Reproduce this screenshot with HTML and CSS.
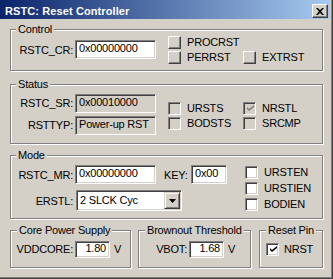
FILE: index.html
```html
<!DOCTYPE html>
<html lang="en">
<head>
    <meta charset="UTF-8">
    <title>RSTC: Reset Controller</title>
    <link rel="stylesheet" href="styles.css">
</head>
<body>
    <div class="window">
        <div class="titlebar">
            <span class="title">RSTC: Reset Controller</span>
            <span class="close">
                <svg width="8" height="7" viewBox="0 0 8 7"><path d="M0 0h2l2 2.2L6 0h2L5 3.5 8 7H6L4 4.8 2 7H0l3-3.5z" fill="#000"/></svg>
            </span>
        </div>
        <div class="client">
            <!-- control -->
            <div class="group control">
                <span class="legend">Control</span>
                <div class="fields">
                    <div class="row"><span class="lbl">RSTC_CR:</span><span class="edit w81">0x00000000</span></div>
                </div>
                <div class="checks two">
                    <div class="check"><span class="btn"></span>PROCRST</div>
                    <div></div>
                    <div class="check"><span class="btn"></span>PERRST</div>
                    <div class="check"><span class="btn"></span>EXTRST</div>
                </div>
            </div>

            <!-- status -->
            <div class="group status">
                <span class="legend">Status</span>
                <div class="fields">
                    <div class="row"><span class="lbl">RSTC_SR:</span><span class="edit w81 ro">0x00010000</span></div>
                    <div class="row"><span class="lbl">RSTTYP:</span><span class="edit w81 ro">Power-up RST</span></div>
                </div>
                <div class="checks two">
                    <div class="check"><span class="box off"></span>URSTS</div>
                    <div class="check"><span class="box off"><svg class="tick" width="7" height="7" viewBox="0 0 7 7"><path d="M0 2l2 2 5-4v2L2 6 0 4z" fill="#808080"/></svg></span>NRSTL</div>
                    <div class="check"><span class="box off"></span>BODSTS</div>
                    <div class="check"><span class="box off"></span>SRCMP</div>
                </div>
            </div>

            <!-- mode -->
            <div class="group mode">
                <span class="legend">Mode</span>
                <div class="fields">
                    <div class="row">
                        <span class="lbl">RSTC_MR:</span><span class="edit w81">0x00000000</span>
                        <span class="key">KEY:</span><span class="edit w36">0x00</span>
                    </div>
                    <div class="row">
                        <span class="lbl">ERSTL:</span>
                        <span class="select">
                            <span class="value">2 SLCK Cyc</span>
                            <span class="drop"><svg width="7" height="4" viewBox="0 0 7 4"><path d="M0 0h7L3.5 4z" fill="#000"/></svg></span>
                        </span>
                    </div>
                </div>
                <div class="checks one">
                    <div class="check"><span class="box"></span>URSTEN</div>
                    <div class="check"><span class="box"></span>URSTIEN</div>
                    <div class="check"><span class="box"></span>BODIEN</div>
                </div>
            </div>

            <!-- bottom -->
            <div class="bottom">
                <div class="group core">
                    <span class="legend">Core Power Supply</span>
                    <span class="lbl w58">VDDCORE:</span><span class="edit num">1.80</span><span class="unit">V</span>
                </div>
                <div class="group brown">
                    <span class="legend">Brownout Threshold</span>
                    <span class="lbl w41">VBOT:</span><span class="edit num">1.68</span><span class="unit">V</span>
                </div>
                <div class="group reset">
                    <span class="legend">Reset Pin</span>
                    <div class="check"><span class="box"><svg class="tick" width="7" height="7" viewBox="0 0 7 7"><path d="M0 2l2 2 5-4v2L2 6 0 4z" fill="#000"/></svg></span>NRST</div>
                </div>
            </div>
        </div>
    </div>
</body>
</html>
```

FILE: styles.css
```css
/* base */
body {
    margin: 0;
    font-family: "Liberation Sans", Arial, sans-serif;
    font-size: 11px;
    letter-spacing: -0.2px;
    color: #000;
}
/* window frame */
.window {
    box-sizing: border-box;
    width: 333px;
    height: 279px;
    padding: 0 2px 2px 0;
    border-right: 1px solid #404040;
    border-bottom: 1px solid #404040;
    background: #d4d0c8;
    box-shadow: inset -1px -1px 0 #808080;
}
.titlebar {
    display: flex;
    justify-content: space-between;
    height: 19px;
    background: linear-gradient(to right, #0a246a, #a6caf0);
}
.title {
    padding: 4px 0 0 5px;
    line-height: 15px;
    font-size: 11px;
    font-weight: bold;
    letter-spacing: 0.1px;
    color: #fff;
}
.close {
    display: flex;
    align-items: center;
    justify-content: center;
    box-sizing: border-box;
    margin: 4px 2px 0 0;
    width: 16px;
    height: 14px;
    border: 1px solid;
    border-color: #fff #404040 #404040 #fff;
    background: #d4d0c8;
    box-shadow: inset -1px -1px 0 #808080;
}
.client {
    padding: 10px 0 0 10px;
}
/* group boxes */
.group {
    position: relative;
    display: flex;
    align-items: center;
    box-sizing: border-box;
    width: 313px;
    border: 1px solid #808080;
    box-shadow: inset 1px 1px 0 #fff, 1px 1px 0 #fff;
}
.legend {
    position: absolute;
    top: -7px;
    left: 5px;
    padding: 0 2px;
    line-height: 13px;
    background: #d4d0c8;
}
.control {
    height: 42px;
    padding: 0 0 1px 6px;
}
.status {
    margin-top: 13px;
    height: 60px;
    padding-left: 6px;
}
.mode {
    margin-top: 11px;
    height: 64px;
    padding: 2px 0 0 6px;
}
.fields {
    display: flex;
    flex-direction: column;
}
.status .fields {
    gap: 3px;
}
.mode .fields {
    gap: 6px;
}
.row {
    display: flex;
    align-items: center;
    gap: 2px;
}
.lbl {
    width: 56px;
    text-align: right;
}
.key {
    margin-left: 6px;
    width: 25px;
}
/* edit fields */
.edit {
    box-sizing: border-box;
    height: 19px;
    padding: 0 3px;
    line-height: 15px;
    border: 1px solid;
    border-color: #808080 #fff #fff #808080;
    background: #fff;
    box-shadow: inset 1px 1px 0 #404040, inset -1px -1px 0 #d4d0c8;
    white-space: nowrap;
}
.edit.ro {
    background: #d4d0c8;
}
.w81 {
    width: 81px;
}
.w36 {
    width: 36px;
}
.select {
    display: flex;
    box-sizing: border-box;
    margin-left: 1px;
    width: 106px;
    height: 21px;
    padding: 1px;
    border: 1px solid;
    border-color: #808080 #fff #fff #808080;
    background: #fff;
    box-shadow: inset 1px 1px 0 #404040, inset -1px -1px 0 #d4d0c8;
}
.select .value {
    flex: 1;
    padding-left: 2px;
    line-height: 17px;
}
.drop {
    display: flex;
    align-items: center;
    justify-content: center;
    box-sizing: border-box;
    width: 16px;
    height: 17px;
    border: 1px solid;
    border-color: #d4d0c8 #404040 #404040 #d4d0c8;
    background: #d4d0c8;
    box-shadow: inset 1px 1px 0 #fff, inset -1px -1px 0 #808080;
}
/* checks */
.checks {
    display: grid;
    margin-left: 12px;
}
.checks.two {
    grid-template-columns: 75px auto;
    grid-auto-rows: 13px;
    row-gap: 2px;
}
.status .checks {
    margin-top: 3px;
}
.checks.one {
    grid-auto-rows: 13px;
    row-gap: 3px;
    margin: 1px 0 0 18px;
}
.check {
    display: flex;
    align-items: center;
    gap: 6px;
    height: 13px;
    line-height: 13px;
}
.box, .btn {
    display: flex;
    align-items: center;
    justify-content: center;
    box-sizing: border-box;
    width: 13px;
    height: 13px;
    border: 1px solid;
}
.box {
    border-color: #808080 #fff #fff #808080;
    background: #fff;
    box-shadow: inset 1px 1px 0 #404040, inset -1px -1px 0 #d4d0c8;
}
.box.off {
    background: #d4d0c8;
}
.btn {
    border-color: #fff #404040 #404040 #fff;
    background: #d4d0c8;
    box-shadow: inset -1px -1px 0 #808080;
}
.tick {
    display: block;
    margin: 1px 0 0 1px;
}
/* bottom row */
.bottom {
    display: flex;
    margin-top: 11px;
}
.bottom .group {
    height: 38px;
}
.bottom .legend {
    left: 6px;
}
.core {
    width: 121px;
    padding-left: 4px;
}
.brown {
    margin-left: 7px;
    width: 113px;
    padding-left: 7px;
}
.reset {
    margin-left: 8px;
    width: 64px;
    padding-left: 6px;
}
.w58 {
    width: 58px;
}
.w41 {
    width: 41px;
}
.num {
    margin-left: 2px;
    width: 35px;
    height: 17px;
    line-height: 13px;
    text-align: right;
}
.unit {
    margin-left: 4px;
}
.reset .check {
    gap: 5px;
}
```
